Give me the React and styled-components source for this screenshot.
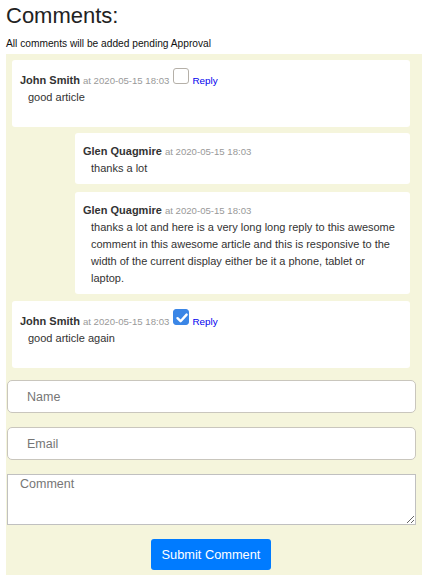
import React from "react";
import styled, { createGlobalStyle } from "styled-components";

const Global = createGlobalStyle`
  html, body { margin: 0; padding: 0; background: #fff; }
  body { font-family: "Liberation Sans", Arial, sans-serif; color: #333; }
  * { box-sizing: border-box; }
`;

const Page = styled.div`
  width: 428px;
  padding-left: 6px;
`;

const Title = styled.h2`
  margin: 3px 0 0;
  font-size: 22px;
  line-height: 26px;
  font-weight: normal;
  color: #222;
`;

const Note = styled.p`
  margin: 8.5px 0 4.5px;
  font-size: 10.2px;
  line-height: 12px;
  color: #111;
`;

const Panel = styled.div`
  width: 416px;
  background: #f5f5dc;
  padding: 6px 0 5px;
  display: flex;
  flex-direction: column;
`;

const Card = styled.div`
  background: #fff;
  border-radius: 3px;
  margin-right: 12px;
  margin-left: ${(p) => (p.$reply ? "69px" : "6px")};
  margin-top: ${(p) => p.$gap}px;
  padding: 10px 8px ${(p) => (p.$reply ? "7px" : "21px")};
`;

const Header = styled.div`
  font-size: 11px;
  line-height: 17px;
  white-space: nowrap;
`;

const Name = styled.b`
  font-weight: bold;
  color: #333;
`;

const Stamp = styled.span`
  font-size: 9.6px;
  color: #999;
`;

const Check = styled.span`
  display: inline-block;
  width: 16px;
  height: 16px;
  margin: -2px 3px 0 4px;
  vertical-align: baseline;
  border-radius: 3px;
  border: 1px solid ${(p) => (p.$on ? "#3b86e6" : "#b5b0a8")};
  background: ${(p) => (p.$on ? "#3b86e6" : "#fff")};
  position: relative;
  svg { position: absolute; left: 1px; top: 1px; }
`;

const Reply = styled.a`
  font-size: 9.9px;
  color: #0000ee;
  text-decoration: none;
`;

const Body = styled.div`
  font-size: 11px;
  line-height: 17px;
  padding-left: 8px;
  padding-right: 1.5px;
  color: #333;
`;

const Field = styled.input`
  display: block;
  width: 409px;
  height: 33px;
  margin: ${(p) => p.$mt}px 0 0 1px;
  border: 1px solid #c9c6bd;
  border-radius: 5px;
  padding: 0 19px;
  font-family: "Liberation Sans", Arial, sans-serif;
  font-size: 12.5px;
  background: #fff;
  &::placeholder { color: #767676; }
`;

const Area = styled.textarea`
  display: block;
  width: 409px;
  height: 51px;
  margin: 14px 0 0 1px;
  border: 1px solid #c0c0c0;
  border-radius: 0;
  padding: 2px 12px;
  font-family: "Liberation Sans", Arial, sans-serif;
  font-size: 12.5px;
  line-height: 14px;
  background: #fff;
  &::placeholder { color: #767676; }
`;

const ButtonRow = styled.div`
  display: flex;
  justify-content: center;
  margin-top: 14px;
  padding-right: 6px;
`;

const Submit = styled.button`
  width: 120px;
  height: 31px;
  border: none;
  border-radius: 3px;
  background: #007bff;
  color: #fff;
  font-family: "Liberation Sans", Arial, sans-serif;
  font-size: 12.8px;
  padding: 0;
`;

const Tick = () => (
  <svg width="14" height="14" viewBox="0 0 14 14">
    <path d="M2.5 7.2 L5.6 10.2 L11.6 3.6" fill="none" stroke="#fff" strokeWidth="2.4" strokeLinecap="round" strokeLinejoin="round" />
  </svg>
);

const comments = [
  { name: "John Smith", text: "good article", reply: false, check: false, gap: 0 },
  { name: "Glen Quagmire", text: "thanks a lot", reply: true, gap: 6 },
  {
    name: "Glen Quagmire",
    text:
      "thanks a lot and here is a very long long reply to this awesome comment in this awesome article and this is responsive to the width of the current display either be it a phone, tablet or laptop.",
    reply: true,
    gap: 7.5,
  },
  { name: "John Smith", text: "good article again", reply: false, check: true, gap: 7 },
];

export default function App() {
  return (
    <Page>
      <Global />
      <Title>Comments:</Title>
      <Note>All comments will be added pending Approval</Note>
      <Panel>
        {comments.map((c, i) => (
          <Card key={i} $reply={c.reply} $gap={c.gap}>
            <Header>
              <Name>{c.name}</Name> <Stamp>at 2020-05-15 18:03</Stamp>
              {!c.reply && (
                <>
                  <Check $on={c.check}>{c.check && <Tick />}</Check>
                  <Reply href="#">Reply</Reply>
                </>
              )}
            </Header>
            <Body>{c.text}</Body>
          </Card>
        ))}
        <Field $mt={12.5} placeholder="Name" />
        <Field $mt={14} placeholder="Email" />
        <Area placeholder="Comment" />
        <ButtonRow>
          <Submit>Submit Comment</Submit>
        </ButtonRow>
      </Panel>
    </Page>
  );
}
